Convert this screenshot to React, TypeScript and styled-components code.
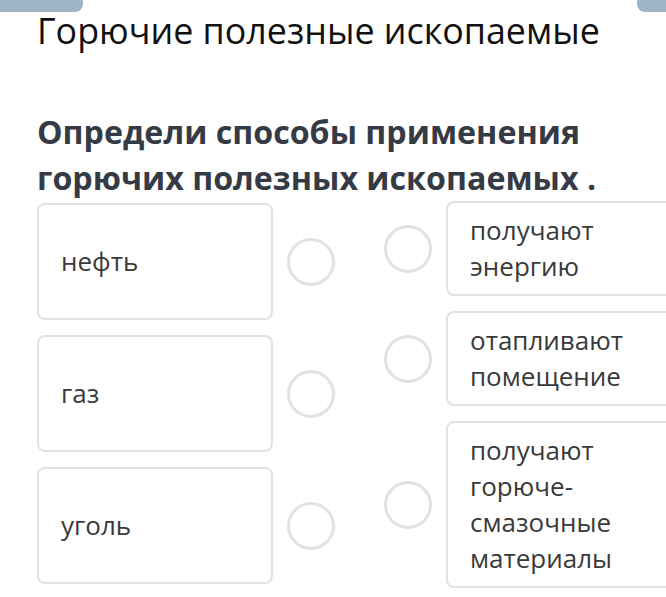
import React from 'react';
import styled, { createGlobalStyle } from 'styled-components';

const GlobalStyle = createGlobalStyle`
  html, body {
    margin: 0;
    padding: 0;
    background: #ffffff;
  }
  body {
    font-family: 'Open Sans', 'Noto Sans', sans-serif;
  }
`;

const Page = styled.div`
  width: 666px;
  height: 597px;
  overflow: hidden;
  background: #fff;
`;

const TopBar = styled.div`
  display: flex;
  justify-content: space-between;
  height: 12px;
`;

const Tab = styled.div<{ side: 'left' | 'right'; w: number }>`
  width: ${props => props.w}px;
  height: 12px;
  background: #9fb4c7;
  border-radius: ${props => props.side === 'left' ? '0 0 8px 0' : '0 0 0 8px'};
`;

const Title = styled.h1`
  margin: -4px 0 0 37px;
  font-size: 35.8px;
  line-height: 44px;
  font-weight: 400;
  color: #111;
`;

const Question = styled.h2`
  margin: 57px 0 0 37px;
  font-size: 32.2px;
  line-height: 46px;
  font-weight: 700;
  color: #353b45;
`;

const Board = styled.div`
  display: flex;
  align-items: flex-start;
  gap: 49px;
  padding-left: 37px;
`;

const Column = styled.div<{ offset: number }>`
  display: flex;
  flex-direction: column;
  gap: 15px;
  padding-top: ${props => props.offset}px;
`;

const Row = styled.div`
  display: flex;
  align-items: center;
  gap: 14px;
`;

const Card = styled.div<{ tall?: boolean }>`
  box-sizing: border-box;
  flex: 0 0 236px;
  width: 236px;
  height: ${props => props.tall ? '117px' : 'auto'};
  display: flex;
  align-items: center;
  padding: 9px 22px 10px;
  border: 2px solid #e0e2e5;
  border-radius: 8px;
  font-size: 26px;
  line-height: 36px;
  color: #3a3a3a;
  background: #fff;
`;

const Circle = styled.div`
  box-sizing: border-box;
  flex: 0 0 48px;
  width: 48px;
  height: 48px;
  border: 3px solid #dfe3e8;
  border-radius: 50%;
`;

const left = ['нефть', 'газ', 'уголь'];
const right = [
  ['получают', 'энергию'],
  ['отапливают', 'помещение'],
  ['получают', 'горюче-', 'смазочные', 'материалы'],
];

const App: React.FC = () => (
  <Page>
    <GlobalStyle />
    <TopBar>
      <Tab side="left" w={83} />
      <Tab side="right" w={29} />
    </TopBar>
    <Title>Горючие полезные ископаемые</Title>
    <Question>
      Определи способы применения
      <br />
      горючих полезных ископаемых .
    </Question>
    <Board>
      <Column offset={2}>
        {left.map(item => (
          <Row key={item}>
            <Card tall>{item}</Card>
            <Circle />
          </Row>
        ))}
      </Column>
      <Column offset={0}>
        {right.map(lines => (
          <Row key={lines.join(' ')}>
            <Circle />
            <Card>
              <div>
                {lines.map(l => <div key={l}>{l}</div>)}
              </div>
            </Card>
          </Row>
        ))}
      </Column>
    </Board>
  </Page>
);

export default App;
